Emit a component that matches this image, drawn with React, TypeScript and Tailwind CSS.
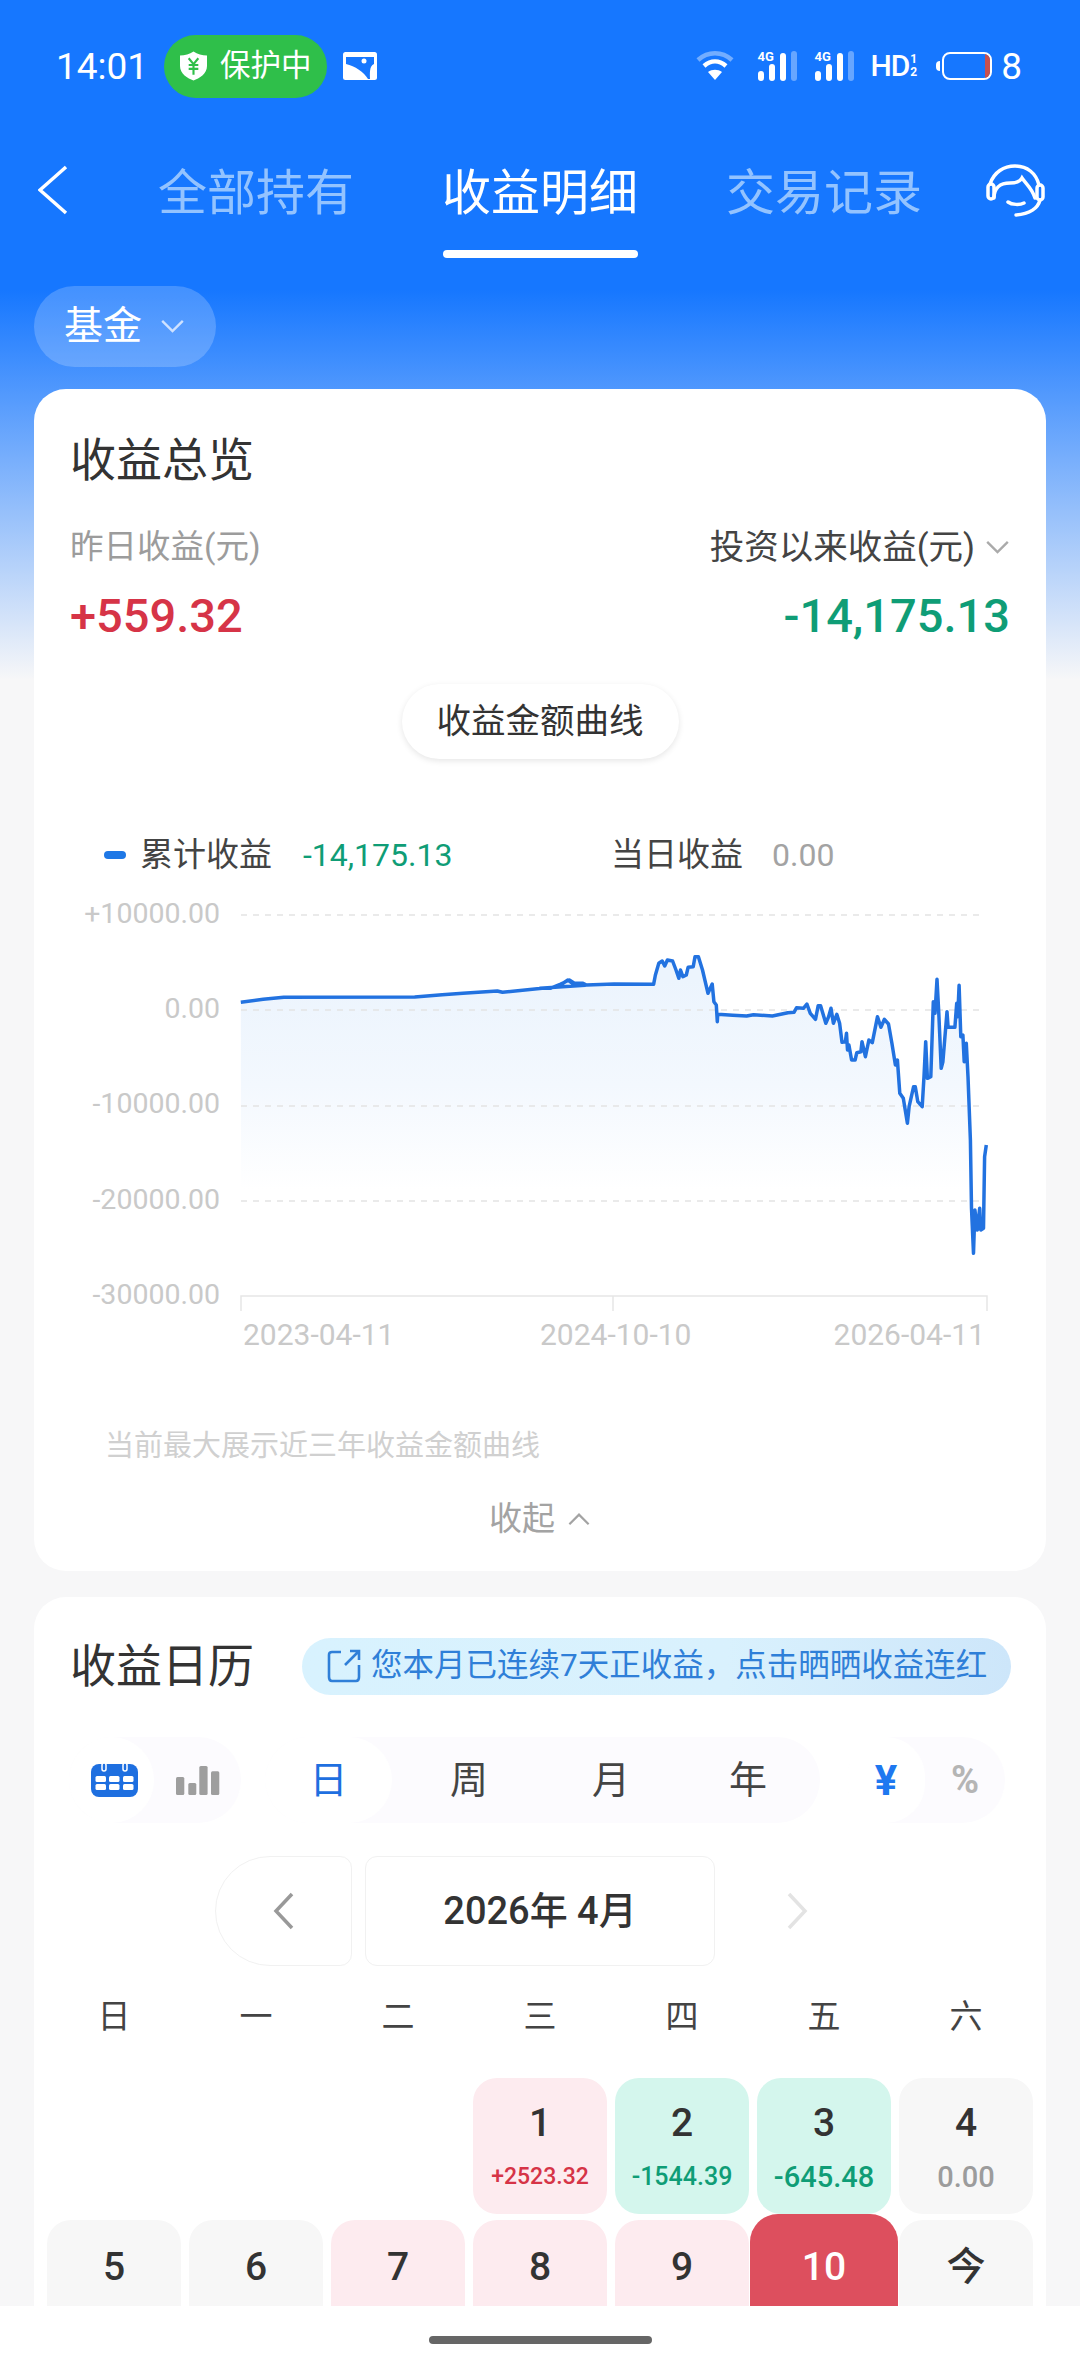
import type { ReactNode } from "react";

// traced from the screenshot, in 2.904x / 3x crop units
const LEFT_PTS = [
  [525, 367], [590, 358], [650, 352], [1030, 351], [1110, 344], [1170, 340], [1270, 333], [1285, 337],
  [1400, 325], [1420, 325], [1450, 317], [1475, 300], [1492, 313], [1515, 310], [1525, 316],
];
const RIGHT_PTS = [
  [0, 325], [30, 325], [60, 312], [85, 300], [100, 310], [125, 310], [135, 315], [215, 312], [330, 313],
  [335, 285], [345, 250], [355, 243], [362, 258], [370, 240], [385, 243], [395, 270], [403, 295], [408, 270],
  [415, 290], [425, 285], [430, 262], [445, 260], [450, 230], [460, 230], [472, 270], [488, 340], [500, 312],
  [505, 365], [512, 375], [515, 425], [516, 403], [560, 406], [600, 408], [620, 404], [675, 408], [720, 398],
  [738, 397], [745, 383], [765, 385], [775, 372], [785, 400], [800, 418], [808, 377], [815, 377], [830, 430],
  [838, 410], [845, 385], [852, 430], [862, 403], [870, 430], [877, 487], [887, 485], [890, 460], [893, 510],
  [897, 495], [905, 540], [915, 540], [920, 518], [932, 515], [935, 485], [945, 530], [955, 480], [965, 488],
  [980, 410], [990, 442], [1000, 418], [1012, 432], [1022, 490], [1032, 555], [1038, 540], [1045, 640],
  [1055, 655], [1067, 730], [1072, 680], [1085, 620], [1090, 620], [1097, 665], [1110, 680], [1115, 590],
  [1120, 485], [1125, 595], [1135, 590], [1142, 365], [1147, 400], [1153, 298], [1158, 400], [1165, 565],
  [1170, 545], [1182, 395], [1185, 442], [1205, 442], [1210, 370], [1213, 410], [1217, 316], [1222, 470],
  [1228, 465], [1232, 545], [1238, 490], [1243, 590], [1250, 780], [1253, 985], [1259, 1120], [1263, 990],
  [1270, 1050], [1277, 985], [1280, 1050], [1288, 1045], [1291, 830], [1296, 795],
];

const linePts = [
  ...LEFT_PTS.map(([x, y]) => [60 + x / 2.904, 880 + y / 3]),
  ...RIGHT_PTS.map(([x, y]) => [540 + x / 2.904, 880 + y / 3]),
];
const lineStr = linePts.map(([x, y]) => `${x.toFixed(1)},${y.toFixed(1)}`).join(" ");
const areaStr = `241,1190 ${lineStr} 986,1190`;

const GRID_Y = [915, 1010, 1106, 1201];
const Y_LABELS: [string, number][] = [
  ["+10000.00", 923],
  ["0.00", 1018],
  ["-10000.00", 1113],
  ["-20000.00", 1209],
  ["-30000.00", 1304],
];

const WEEKDAYS = ["日", "一", "二", "三", "四", "五", "六"];

type Cell = { day: string; bg: string; val?: string; valCls?: string; selected?: boolean };

const ROW_1: (Cell | null)[] = [
  null,
  null,
  null,
  { day: "1", bg: "bg-[#fdebef]", val: "+2523.32", valCls: "text-[23px] text-[#d63447]" },
  { day: "2", bg: "bg-[#d4f6ed]", val: "-1544.39", valCls: "text-[25px] text-[#0f9d76]" },
  { day: "3", bg: "bg-[#d4f6ed]", val: "-645.48", valCls: "text-[29px] text-[#0f9d76]" },
  { day: "4", bg: "bg-[#f7f7f7]", val: "0.00", valCls: "text-[29px] text-[#9c9c9c]" },
];

const ROW_2: Cell[] = [
  { day: "5", bg: "bg-[#f7f7f7]" },
  { day: "6", bg: "bg-[#f7f7f7]" },
  { day: "7", bg: "bg-[#fdebef]" },
  { day: "8", bg: "bg-[#fdebef]" },
  { day: "9", bg: "bg-[#fdebef]" },
  { day: "10", bg: "bg-[#dd4f5e]", selected: true },
  { day: "今", bg: "bg-[#f7f7f7]" },
];

function Chevron({ dir, className, weight = 2.5 }: { dir: "up" | "down" | "left" | "right"; className: string; weight?: number }) {
  const pts = {
    up: "2,14 13,3 24,14",
    down: "2,2 13,13 24,2",
    left: "19,2 3,19 19,36",
    right: "3,2 19,19 3,36",
  }[dir];
  const box = dir === "up" || dir === "down" ? "0 0 26 16" : "0 0 22 38";
  return (
    <svg viewBox={box} className={className} fill="none" stroke="currentColor" strokeWidth={weight}>
      <polyline points={pts} />
    </svg>
  );
}

function Signal() {
  return (
    <div className="relative w-[40px] h-[30px]">
      <span className="absolute left-0 top-[-1px] text-[13px] leading-[14px] font-bold text-white">4G</span>
      <svg viewBox="0 0 40 30" className="w-[40px] h-[30px]" fill="#fff">
        <rect x="1" y="20" width="6" height="10" rx="3" />
        <rect x="12" y="13" width="6" height="17" rx="3" />
        <rect x="23" y="2" width="6" height="28" rx="3" />
        <rect x="34" y="0" width="6" height="30" rx="3" opacity="0.35" />
      </svg>
    </div>
  );
}

function StatusBar() {
  return (
    <div className="h-[132px] flex items-center justify-between pl-[56px] pr-[58px] text-white">
      <div className="flex items-center">
        <span className="text-[37px] w-[89px] leading-none">14:01</span>
        <div className="ml-[19px] w-[163px] h-[63px] rounded-full bg-[#2fbf4a] flex items-center pl-[16px] gap-[13px]">
          <svg viewBox="0 0 28 30" className="w-[27px] h-[30px]">
            <path d="M14 0 C18 3 23 4 28 4 V15 C28 23 20 28 14 30 C8 28 0 23 0 15 V4 C5 4 10 3 14 0Z" fill="#fff" />
            <path d="M9 7 L14 13 L19 7 M14 13 V24 M9 14 H19 M9 18 H19" stroke="#2fbf4a" strokeWidth="2.2" fill="none" />
          </svg>
          <span className="text-[30.5px] leading-none">保护中</span>
        </div>
        <svg viewBox="0 0 34 28" className="ml-[16px] w-[34px] h-[28px]">
          <rect width="34" height="28" rx="2.5" fill="#fff" />
          <path d="M3 5 H31 V12 C26 14 27 22 27 27 H25 C21 20 12 14 3 12Z" fill="#1677ff" />
          <circle cx="21" cy="9" r="2.5" fill="#fff" />
        </svg>
      </div>
      <div className="flex items-center">
        <svg viewBox="0 0 38 30" className="w-[38px] h-[30px]" fill="none" stroke="#fff" strokeWidth="4.5">
          <path d="M2 9 C12 0 26 0 36 9" opacity="0.4" />
          <path d="M8 15 C15 9 23 9 30 15" />
          <path d="M19 29 L12 21 C16 18 22 18 26 21Z" fill="#fff" stroke="none" />
        </svg>
        <div className="ml-[23px]">
          <Signal />
        </div>
        <div className="ml-[17px]">
          <Signal />
        </div>
        <div className="ml-[16px] flex items-center">
          <span className="text-[30px] leading-none font-medium tracking-[-1px]">HD</span>
          <span className="flex flex-col items-center ml-[1px] text-[12px] leading-[13px] font-bold">
            <span>1</span>
            <span>2</span>
          </span>
        </div>
        <div className="ml-[19px] w-[4px] h-[10px] rounded-l-full bg-white" />
        <div className="ml-[2px] w-[50px] h-[28px] rounded-[8px] border-[2.5px] border-white flex justify-end overflow-hidden">
          <div className="w-[5px] bg-[#c8504f]" />
        </div>
        <span className="ml-[9px] text-[37px] leading-none">8</span>
      </div>
    </div>
  );
}

function Tab({ label, active }: { label: string; active?: boolean }) {
  return (
    <div className="w-[192px] flex flex-col items-center">
      <span className={`text-[49px] leading-[58px] mt-[33px] whitespace-nowrap ${active ? "text-white" : "text-[#93c3ff]"}`}>{label}</span>
      {active ? <div className="mt-[27px] w-[195px] h-[8px] rounded-full bg-white" /> : null}
    </div>
  );
}

function NavBar() {
  return (
    <div className="h-[126px] flex items-start pl-[38px]">
      <svg viewBox="0 0 30 50" className="mt-[33px] w-[30px] h-[50px] shrink-0" fill="none" stroke="#fff" strokeWidth="3.5">
        <polyline points="28,2 2,25 28,48" />
      </svg>
      <div className="ml-[92px]">
        <Tab label="全部持有" />
      </div>
      <div className="ml-[92px]">
        <Tab label="收益明细" active />
      </div>
      <div className="ml-[92px]">
        <Tab label="交易记录" />
      </div>
      <svg viewBox="0 0 90 90" className="ml-[50px] mt-[18px] w-[90px] h-[90px] shrink-0" fill="none" stroke="#fff" strokeWidth="3.5" strokeLinecap="round">
        <path d="M20 34 C24 22 34 16 45 16 C57 16 66 23 69 35" />
        <path d="M24 48 C24 38 30 33 40 33 C46 33 50 32 52 28 C56 34 62 38 65 48" />
        <rect x="18" y="34" width="6" height="15" rx="3" />
        <rect x="67" y="35" width="6" height="15" rx="3" />
        <path d="M38 52 C42 55 50 55 54 53" />
        <path d="M70 50 C68 58 60 64 46 65" />
      </svg>
    </div>
  );
}

function Chart() {
  return (
    <svg viewBox="34 877 1012 483" className="w-[1012px] h-[483px] block">
      <defs>
        <linearGradient id="area" gradientUnits="userSpaceOnUse" x1="0" y1="980" x2="0" y2="1190">
          <stop offset="0" stopColor="#ecf4fd" />
          <stop offset="0.5" stopColor="#f3f8fe" />
          <stop offset="1" stopColor="#ffffff" />
        </linearGradient>
      </defs>
      <polygon points={areaStr} fill="url(#area)" />
      {GRID_Y.map((y) => (
        <line key={y} x1="241" x2="982" y1={y} y2={y} stroke="#e4e4e4" strokeWidth="1.5" strokeDasharray="6 6" />
      ))}
      <path d="M241 1311 V1296 H987 V1311 M613 1296 V1311" fill="none" stroke="#e6e6e6" strokeWidth="1.5" />
      <polyline points={lineStr} fill="none" stroke="#2272e0" strokeWidth="3.5" strokeLinejoin="round" />
      {Y_LABELS.map(([t, y]) => (
        <text key={t} x="220" y={y} textAnchor="end" className="fill-[#c9c9c9] text-[28.5px]">
          {t}
        </text>
      ))}
      <text x="243" y="1345" className="fill-[#c9c9c9] text-[30px]">2023-04-11</text>
      <text x="540" y="1345" className="fill-[#c9c9c9] text-[30px]">2024-10-10</text>
      <text x="985" y="1345" textAnchor="end" className="fill-[#c9c9c9] text-[30px]">2026-04-11</text>
    </svg>
  );
}

function OverviewCard() {
  return (
    <div className="mx-[34px] w-[1012px] rounded-[32px] bg-white pt-[41px] pb-[30px]">
      <div className="pl-[36px] text-[46px] leading-[60px] text-[#333]">收益总览</div>
      <div className="mt-[35px] px-[36px] flex items-center justify-between leading-[44px]">
        <span className="text-[33.5px] text-[#9c9c9c]">昨日收益(元)</span>
        <span className="flex items-center text-[34.5px] text-[#444]">
          投资以来收益(元)
          <Chevron dir="down" className="ml-[10px] w-[25px] h-[15px] text-[#aaa]" />
        </span>
      </div>
      <div className="mt-[17px] px-[36px] flex items-center justify-between text-[47px] leading-[60px] font-medium">
        <span className="text-[#d63447]">+559.32</span>
        <span className="text-[#0f9d76]">-14,175.13</span>
      </div>
      <div className="mt-[38px] flex justify-center">
        <div className="w-[277px] h-[75px] rounded-full bg-white shadow-[0_2px_6px_rgba(0,0,0,0.1)] flex items-center justify-center text-[34.5px] text-[#333] whitespace-nowrap">
          收益金额曲线
        </div>
      </div>
      <div className="mt-[74px] pl-[70px] flex items-center text-[33px] leading-[44px]">
        <div className="w-[22px] h-[8px] rounded-full bg-[#1e78e6]" />
        <span className="ml-[14px] w-[132px] text-[#444]">累计收益</span>
        <span className="ml-[31px] w-[149px] text-[32px] text-[#0f9d76]">-14,175.13</span>
        <span className="ml-[159px] w-[132px] text-[#444]">当日收益</span>
        <span className="ml-[29px] text-[32px] text-[#a3a3a3]">0.00</span>
      </div>
      <Chart />
      <div className="mt-[66px] pl-[71px] text-[29px] leading-[40px] text-[#d0d0d0]">当前最大展示近三年收益金额曲线</div>
      <div className="mt-[31px] flex items-center justify-center text-[33px] leading-[44px] text-[#a3a3a3]">
        收起
        <Chevron dir="up" className="ml-[12px] w-[24px] h-[14px] text-[#a3a3a3]" />
      </div>
    </div>
  );
}

function Seg({ active, w, children }: { active?: boolean; w: string; children: ReactNode }) {
  return <div className={`${w} h-full flex items-center justify-center rounded-full ${active ? "bg-white" : ""}`}>{children}</div>;
}

function CalendarCard() {
  return (
    <div className="mt-[26px] mx-[34px] w-[1012px] rounded-[32px] bg-white pt-[39px] pb-[40px]">
      <div className="flex items-center pl-[36px] h-[60px]">
        <span className="w-[180px] text-[46px] leading-[60px] text-[#333] whitespace-nowrap">收益日历</span>
        <div className="ml-[52px] w-[709px] h-[57px] rounded-full bg-[linear-gradient(to_right,#d8f2fe,#d9f1fd_60%,#cde6fa)] flex items-center pl-[25px] text-[#2f7fd8]">
          <svg viewBox="0 0 34 34" className="w-[34px] h-[34px]" fill="none" stroke="currentColor" strokeWidth="2.6">
            <path d="M14 3 H5 C3 3 2 4 2 6 V28 C2 30 3 32 5 32 H29 C31 32 32 30 32 28 V16" />
            <path d="M18 16 L31 3 M23 2 H32 V11" />
          </svg>
          <span className="ml-[10px] text-[31.5px] leading-none whitespace-nowrap">您本月已连续7天正收益，点击晒晒收益连红</span>
        </div>
      </div>

      <div className="mt-[41px] h-[86px] flex items-center pl-[35px] text-[#444]">
        <div className="w-[172px] h-full rounded-full bg-[#fcfbfe] flex">
          <Seg active w="w-[85px]">
            <svg viewBox="0 0 47 34" className="ml-[5px] w-[47px] h-[34px]">
              <rect x="0" y="1" width="47" height="33" rx="8" fill="#1e6fe0" />
              <rect x="11" y="0" width="4" height="8" rx="2" fill="#1e6fe0" stroke="#fff" strokeWidth="1.5" />
              <rect x="32" y="0" width="4" height="8" rx="2" fill="#1e6fe0" stroke="#fff" strokeWidth="1.5" />
              {[4.5, 18, 32].map((x) =>
                [13, 21].map((y) => <rect key={`${x}-${y}`} x={x} y={y} width="10.5" height="6" rx="1.5" fill="#fff" />)
              )}
            </svg>
          </Seg>
          <Seg w="w-[87px]">
            <svg viewBox="0 0 44 29" className="w-[44px] h-[29px]" fill="#9e9e9e">
              <rect x="0" y="11" width="8.3" height="18" rx="1.5" />
              <rect x="12.3" y="17" width="8" height="12" rx="1.5" />
              <rect x="23.3" y="0" width="8.3" height="29" rx="1.5" />
              <rect x="35" y="5.3" width="8.3" height="23.7" rx="1.5" />
            </svg>
          </Seg>
        </div>
        <div className="ml-[24px] w-[555px] h-full rounded-full bg-[#fcfbfe] flex text-[38px]">
          <Seg active w="w-[127px]">
            <span className="text-[#1e6fe0]">日</span>
          </Seg>
          <Seg w="w-[154px]">周</Seg>
          <Seg w="w-[130px]">月</Seg>
          <Seg w="w-[144px]">年</Seg>
        </div>
        <div className="ml-[27px] w-[158px] h-full rounded-full bg-[#fcfbfe] flex text-[42px] font-bold">
          <Seg active w="w-[78px]">
            <span className="text-[#1e78f0]">¥</span>
          </Seg>
          <Seg w="w-[80px]">
            <span className="text-[#b5b5b5] text-[38px]">%</span>
          </Seg>
        </div>
      </div>

      <div className="mt-[33px] flex justify-center gap-[13px] h-[110px]">
        <div className="w-[137px] border border-[#f1f1f1] rounded-l-[56px] rounded-r-[12px] flex items-center justify-center">
          <Chevron dir="left" weight={3.5} className="w-[22px] h-[38px] text-[#999]" />
        </div>
        <div className="w-[350px] border border-[#f1f1f1] rounded-[12px] flex items-center justify-center text-[38px] font-medium text-[#333] whitespace-pre">
          2026年 4月
        </div>
        <div className="w-[137px] flex items-center justify-center">
          <Chevron dir="right" weight={3.5} className="w-[22px] h-[38px] text-[#e3e3e3]" />
        </div>
      </div>

      <div className="mt-[29px] ml-[13px] w-[986px] grid grid-cols-7 gap-x-[8px] text-[33px] leading-[44px] text-[#444] text-center">
        {WEEKDAYS.map((d) => (
          <div key={d}>{d}</div>
        ))}
      </div>

      <div className="mt-[39px] ml-[13px] w-[986px] grid grid-cols-7 gap-x-[8px] gap-y-[6px] text-center">
        {ROW_1.map((c, i) =>
          c ? (
            <div key={c.day} className={`h-[136px] rounded-[24px] pt-[22px] ${c.bg}`}>
              <div className="text-[39px] leading-[46px] font-medium text-[#333]">{c.day}</div>
              <div className={`mt-[13px] leading-[36px] font-medium ${c.valCls}`}>{c.val}</div>
            </div>
          ) : (
            <div key={`blank-${i}`} className="h-[136px]" />
          )
        )}
        {ROW_2.map((c) => (
          <div
            key={c.day}
            className={
              c.selected
                ? `h-[142px] -mt-[6px] -mx-[7px] rounded-[28px] pt-[30px] relative text-white ${c.bg}`
                : `h-[136px] rounded-[24px] pt-[24px] text-[#333] ${c.bg}`
            }
          >
            <div className="text-[39px] leading-[46px] font-medium">{c.day}</div>
          </div>
        ))}
      </div>
    </div>
  );
}

export default function App() {
  return (
    <div className="w-[1080px] h-[2375px] flex flex-col overflow-hidden bg-white [font-family:Roboto,'Noto_Sans_CJK_SC',sans-serif]">
      <div className="h-[2306px] shrink-0 overflow-hidden bg-[linear-gradient(to_bottom,#1677ff_290px,#f7f7f8_680px)]">
        <StatusBar />
        <NavBar />
        <div className="mt-[28px] ml-[34px] w-[182px] h-[81px] rounded-full bg-white/20 flex items-center pl-[30px] text-white">
          <span className="text-[39px] leading-none">基金</span>
          <Chevron dir="down" className="ml-[18px] w-[25px] h-[15px] text-[#cfe2ff]" />
        </div>
        <div className="mt-[22px]">
          <OverviewCard />
          <CalendarCard />
        </div>
      </div>
      <div className="flex-1 flex justify-center pt-[30px]">
        <div className="w-[223px] h-[8px] rounded-full bg-[#666]" />
      </div>
    </div>
  );
}
